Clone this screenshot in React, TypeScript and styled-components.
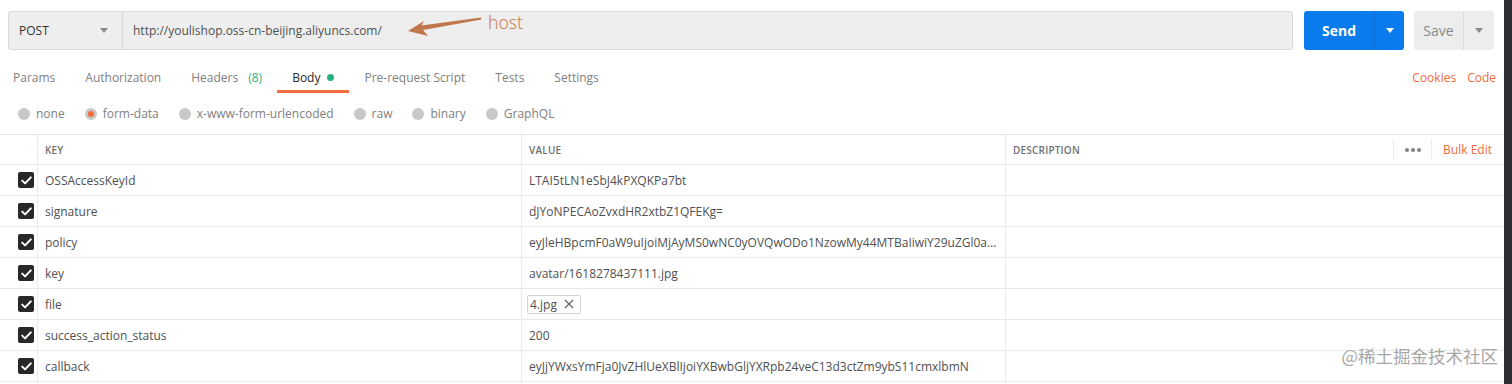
import React from 'react';
import styled, { createGlobalStyle } from 'styled-components';

const GlobalStyle = createGlobalStyle`
  html, body {
    margin: 0;
    padding: 0;
    background: #ffffff;
  }
  body {
    font-family: "Open Sans", "Noto Sans", sans-serif;
    font-size: 12px;
    color: #505050;
  }
`;

const Frame = styled.div`
  display: flex;
  width: 1512px;
  height: 384px;
  overflow: hidden;
`;

const Panel = styled.div`
  position: relative;
  flex: 1;
  min-width: 0;
  background: #fff;
`;

const ScrollStrip = styled.div`
  width: 8px;
  background: #2c2e32;
`;

const TopBar = styled.div`
  display: flex;
  align-items: stretch;
  height: 39px;
  padding: 11px 10px 0 8px;
`;

const RequestBox = styled.div`
  position: relative;
  flex: 1;
  display: flex;
  background: #eeeeee;
  border: 1px solid #dadada;
  border-radius: 3px;
  margin-right: 11px;
`;

const Method = styled.div`
  width: 114px;
  display: flex;
  align-items: center;
  justify-content: space-between;
  padding: 0 14px 0 10px;
  box-sizing: border-box;
  border-right: 1px solid #d6d6d6;
  font-size: 12px;
  color: #333;
`;

const Caret = styled.span<{ $color: string }>`
  width: 0;
  height: 0;
  border-left: 4px solid transparent;
  border-right: 4px solid transparent;
  border-top: 5px solid ${(p) => p.$color};
`;

const Url = styled.div`
  display: flex;
  align-items: center;
  padding-left: 10px;
  font-size: 12px;
  color: #505050;
`;

const Note = styled.div`
  position: absolute;
  left: 397px;
  top: 2px;
  display: flex;
  align-items: flex-start;
  pointer-events: none;
`;

const NoteText = styled.span`
  font-family: "Noto Sans", "Open Sans", sans-serif;
  font-size: 17.5px;
  font-weight: 300;
  color: #c8804f;
  margin-left: 2px;
  margin-top: -4px;
`;

const SplitButton = styled.div<{ $primary?: boolean; $w: number; $split: number }>`
  display: flex;
  width: ${(p) => p.$w}px;
  border-radius: 3px;
  background: ${(p) => (p.$primary ? '#097bed' : '#ededed')};
  margin-right: ${(p) => (p.$primary ? 10 : 0)}px;
  overflow: hidden;

  .label {
    width: ${(p) => p.$split}px;
    display: flex;
    align-items: center;
    justify-content: center;
    font-size: 14px;
    font-weight: ${(p) => (p.$primary ? 700 : 400)};
    color: ${(p) => (p.$primary ? '#ffffff' : '#8a8a8a')};
    border-right: 1px solid ${(p) => (p.$primary ? '#0a6fd6' : '#dcdcdc')};
  }

  .drop {
    flex: 1;
    display: flex;
    align-items: center;
    justify-content: center;
  }
`;

const TabsRow = styled.div`
  display: flex;
  align-items: stretch;
  height: 32px;
  margin-top: 11px;
  padding-right: 8px;
`;

const Tab = styled.div<{ $active?: boolean }>`
  display: flex;
  align-items: center;
  padding: 3px 15px 0;
  font-size: 12px;
  color: ${(p) => (p.$active ? '#282828' : '#808080')};
  border-bottom: 3px solid ${(p) => (p.$active ? '#f26b3a' : 'transparent')};

  &:first-child {
    padding-left: 13px;
  }

  .count {
    color: #26b47f;
    margin-left: 10px;
  }
`;

const GreenDot = styled.span`
  width: 7px;
  height: 7px;
  border-radius: 50%;
  background: #26b47f;
  margin-left: 7px;
  margin-top: 1px;
`;

const TabSpacer = styled.div`
  flex: 1;
`;

const LinkTab = styled.div`
  display: flex;
  align-items: center;
  margin-left: 11px;
  font-size: 12px;
  color: #f26b3a;
`;

const RadioRow = styled.div`
  display: flex;
  align-items: center;
  gap: 20px;
  height: 41px;
  padding-left: 18px;
`;

const RadioItem = styled.label`
  display: flex;
  align-items: center;
  gap: 6px;
  font-size: 12px;
  color: #808080;
`;

const RadioDot = styled.span<{ $on?: boolean }>`
  width: 12px;
  height: 12px;
  border-radius: 50%;
  box-sizing: border-box;
  background: ${(p) => (p.$on ? '#f26b3a' : '#c8c8c8')};
  border: ${(p) => (p.$on ? '3px solid #c8c8c8' : 'none')};
`;

const Table = styled.div`
  border-top: 1px solid #e6e6e6;
`;

const Row = styled.div<{ $head?: boolean }>`
  display: grid;
  grid-template-columns: 37px 484px 484px 1fr;
  height: ${(p) => (p.$head ? 29 : 30)}px;
  border-bottom: 1px solid #e8e8e8;
`;

const Cell = styled.div<{ $head?: boolean }>`
  display: flex;
  align-items: center;
  min-width: 0;
  padding-left: 7px;
  border-left: 1px solid #ececec;
  font-size: ${(p) => (p.$head ? '10px' : '12px')};
  font-weight: ${(p) => (p.$head ? 600 : 400)};
  color: ${(p) => (p.$head ? '#707070' : '#505050')};
  letter-spacing: ${(p) => (p.$head ? '0.2px' : '0')};
  white-space: nowrap;
  overflow: hidden;

  &:first-child {
    border-left: none;
    padding-left: 18px;
  }

  .txt {
    overflow: hidden;
    text-overflow: ellipsis;
    padding-right: 6px;
  }
`;

const Check = styled.span`
  width: 16px;
  height: 16px;
  border-radius: 2px;
  background: #282828;
  display: flex;
  align-items: center;
  justify-content: center;
`;

const FileChip = styled.span`
  display: inline-flex;
  align-items: center;
  gap: 7px;
  height: 19px;
  padding: 0 6px 0 2px;
  margin-left: -2px;
  border: 1px solid #d4d4d4;
  border-radius: 2px;
  box-sizing: border-box;
`;

const HeadTools = styled.div`
  margin-left: auto;
  display: flex;
  align-items: center;
  height: 100%;
`;

const ToolDivider = styled.span`
  width: 1px;
  height: 22px;
  background: #ececec;
`;

const Dots = styled.span`
  display: flex;
  gap: 2px;
  padding: 0 10px 0 11px;

  i {
    width: 4px;
    height: 4px;
    border-radius: 50%;
    background: #808080;
  }
`;

const BulkEdit = styled.span`
  padding: 0 12px 0 11px;
  font-size: 12px;
  font-weight: 400;
  color: #f26b3a;
  letter-spacing: 0;
`;

const Watermark = styled.div`
  position: absolute;
  right: 6px;
  bottom: 16px;
  font-family: "Noto Sans CJK SC", sans-serif;
  font-size: 17.5px;
  color: #a8a8a8;
  pointer-events: none;
`;

const rows: { key: string; value: string; file?: boolean }[] = [
  { key: 'OSSAccessKeyId', value: 'LTAI5tLN1eSbJ4kPXQKPa7bt' },
  { key: 'signature', value: 'dJYoNPECAoZvxdHR2xtbZ1QFEKg=' },
  {
    key: 'policy',
    value:
      'eyJleHBpcmF0aW9uIjoiMjAyMS0wNC0yOVQwODo1NzowMy44MTBaIiwiY29uZGl0aW9ucyI6W1siY29udGVudC1sZW5ndGgtcmFuZ2UiLDAsMTA0ODU3NjAwMF1dfQ==',
  },
  { key: 'key', value: 'avatar/1618278437111.jpg' },
  { key: 'file', value: '4.jpg', file: true },
  { key: 'success_action_status', value: '200' },
  { key: 'callback', value: 'eyJjYWxsYmFja0JvZHlUeXBlIjoiYXBwbGljYXRpb24veC13d3ctZm9ybS11cmxlbmN' },
];

const tabs = ['Params', 'Authorization', 'Headers', 'Body', 'Pre-request Script', 'Tests', 'Settings'];
const bodyModes = ['none', 'form-data', 'x-www-form-urlencoded', 'raw', 'binary', 'GraphQL'];

const CheckMark = () => (
  <svg width="11" height="9" viewBox="0 0 11 9">
    <path d="M1.2 4.6 L4.1 7.4 L9.8 1.4" fill="none" stroke="#fff" strokeWidth="2" strokeLinecap="round" strokeLinejoin="round" />
  </svg>
);

export default function App() {
  return (
    <Frame>
      <GlobalStyle />
      <Panel>
        <TopBar>
          <RequestBox>
            <Method>
              POST
              <Caret $color="#8a8a8a" />
            </Method>
            <Url>http://youlishop.oss-cn-beijing.aliyuncs.com/</Url>
            <Note>
              <svg width="80" height="26" viewBox="0 0 80 26">
                <path d="M2 17 L18 7 L15.5 11.5 L75 3.5 L75.5 5.5 L17 16 L22 22 Z" fill="#c0774b" />
              </svg>
              <NoteText>host</NoteText>
            </Note>
          </RequestBox>
          <SplitButton $primary $w={100} $split={70}>
            <span className="label">Send</span>
            <span className="drop">
              <Caret $color="#ffffff" />
            </span>
          </SplitButton>
          <SplitButton $w={80} $split={49}>
            <span className="label">Save</span>
            <span className="drop">
              <Caret $color="#8a8a8a" />
            </span>
          </SplitButton>
        </TopBar>

        <TabsRow>
          {tabs.map((t) => (
            <Tab key={t} $active={t === 'Body'}>
              {t}
              {t === 'Headers' && <span className="count">(8)</span>}
              {t === 'Body' && <GreenDot />}
            </Tab>
          ))}
          <TabSpacer />
          <LinkTab>Cookies</LinkTab>
          <LinkTab>Code</LinkTab>
        </TabsRow>

        <RadioRow>
          {bodyModes.map((m) => (
            <RadioItem key={m}>
              <RadioDot $on={m === 'form-data'} />
              {m}
            </RadioItem>
          ))}
        </RadioRow>

        <Table>
          <Row $head>
            <Cell $head />
            <Cell $head>KEY</Cell>
            <Cell $head>VALUE</Cell>
            <Cell $head>
              DESCRIPTION
              <HeadTools>
                <ToolDivider />
                <Dots>
                  <i />
                  <i />
                  <i />
                </Dots>
                <ToolDivider />
                <BulkEdit>Bulk Edit</BulkEdit>
              </HeadTools>
            </Cell>
          </Row>
          {rows.map((r) => (
            <Row key={r.key}>
              <Cell>
                <Check>
                  <CheckMark />
                </Check>
              </Cell>
              <Cell>
                <span className="txt">{r.key}</span>
              </Cell>
              <Cell>
                {r.file ? (
                  <FileChip>
                    {r.value}
                    <svg width="10" height="10" viewBox="0 0 10 10">
                      <path d="M1 1 L9 9 M9 1 L1 9" stroke="#666" strokeWidth="1.3" />
                    </svg>
                  </FileChip>
                ) : (
                  <span className="txt">{r.value}</span>
                )}
              </Cell>
              <Cell />
            </Row>
          ))}
          <Row>
            <Cell />
            <Cell />
            <Cell />
            <Cell />
          </Row>
        </Table>
        <Watermark>@稀土掘金技术社区</Watermark>
      </Panel>
      <ScrollStrip />
    </Frame>
  );
}
